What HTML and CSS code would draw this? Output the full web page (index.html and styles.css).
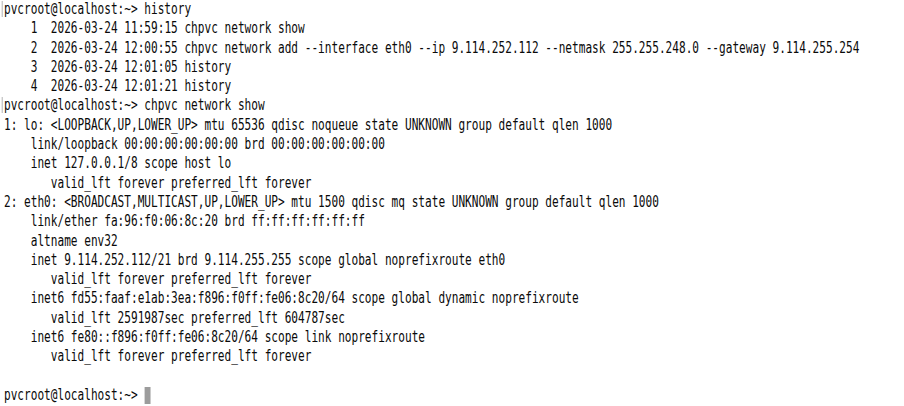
FILE: index.html
```html
<!DOCTYPE html>
<html lang="en">
<head>
<meta charset="utf-8">
<title>Terminal</title>
<link rel="stylesheet" href="styles.css">
</head>
<body>
<div class="term">
<pre class="out"><span class="edge"></span>pvcroot@localhost:~&gt; history
    1  2026-03-24 11:59:15 chpvc network show
    2  2026-03-24 12:00:55 chpvc network add --interface eth0 --ip 9.114.252.112 --netmask 255.255.248.0 --gateway 9.114.255.254
    3  2026-03-24 12:01:05 history
    4  2026-03-24 12:01:21 history
<span class="edge"></span>pvcroot@localhost:~&gt; chpvc network show
1: lo: &lt;LOOPBACK,UP,LOWER_UP&gt; mtu 65536 qdisc noqueue state UNKNOWN group default qlen 1000
    link/loopback 00:00:00:00:00:00 brd 00:00:00:00:00:00
    inet 127.0.0.1/8 scope host lo
       valid_lft forever preferred_lft forever
2: eth0: &lt;BROADCAST,MULTICAST,UP,LOWER_UP&gt; mtu 1500 qdisc mq state UNKNOWN group default qlen 1000
    link/ether fa:96:f0:06:8c:20 brd ff:ff:ff:ff:ff:ff
    altname env32
    inet 9.114.252.112/21 brd 9.114.255.255 scope global noprefixroute eth0
       valid_lft forever preferred_lft forever
    inet6 fd55:faaf:e1ab:3ea:f896:f0ff:fe06:8c20/64 scope global dynamic noprefixroute
       valid_lft 2591987sec preferred_lft 604787sec
    inet6 fe80::f896:f0ff:fe06:8c20/64 scope link noprefixroute
       valid_lft forever preferred_lft forever

pvcroot@localhost:~&gt; <span class="cursor"></span></pre>
</div>
</body>
</html>
```

FILE: styles.css
```css
html, body {
  margin: 0;
  padding: 0;
  background: #ffffff;
}

.term {
  width: 904px;
  height: 406px;
  overflow: hidden;
  padding-left: 4px;
  box-sizing: border-box;
}

.out {
  margin: 0;
  font-family: "DejaVu Sans Mono", "Liberation Mono", monospace;
  font-size: 15px;
  line-height: 19.3px;
  color: #0a0a0a;
  white-space: pre;
  transform: scaleX(0.74);
  transform-origin: left top;
}

.edge {
  display: inline-block;
  width: 1.4px;
  height: 16px;
  margin-left: -3px;
  margin-right: 1.6px;
  vertical-align: -3px;
  background: #9a9a9a;
}

.cursor {
  display: inline-block;
  width: 8px;
  height: 17px;
  vertical-align: -4px;
  background: #9c9c9c;
}
```
